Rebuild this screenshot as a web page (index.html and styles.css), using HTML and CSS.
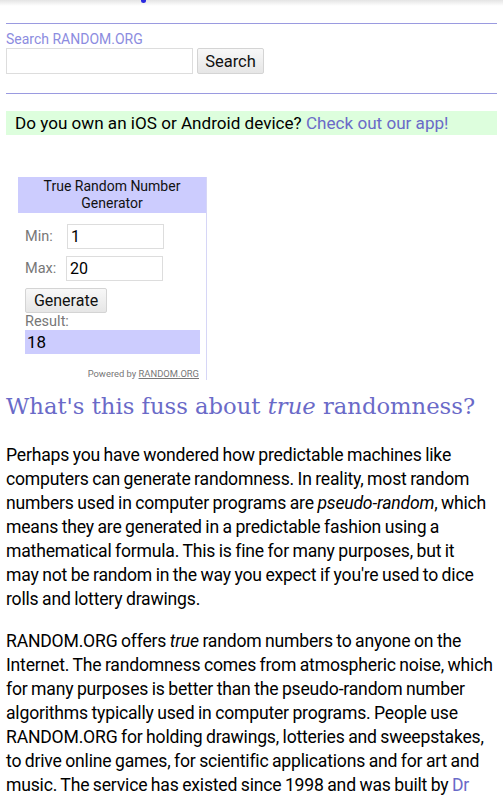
FILE: index.html
```html
<!DOCTYPE html>
<html lang="en">
<head>
  <meta charset="UTF-8">
  <meta name="viewport" content="width=device-width, initial-scale=1.0">
  <title>RANDOM.ORG - True Random Number Service</title>
  <link rel="stylesheet" href="styles.css">
</head>
<body>
  <div class="top-shade"><span class="top-dot"></span></div>

  <hr class="rule">

  <!-- Search -->
  <form class="search">
    <label class="search-label" for="q">Search RANDOM.ORG</label>
    <div class="search-row">
      <input id="q" class="search-input" type="text">
      <button class="btn search-btn" type="button">Search</button>
    </div>
  </form>

  <hr class="rule">

  <div class="app-note">
    Do you own an iOS or Android device? <a href="#">Check out our app!</a>
  </div>

  <!-- Number generator widget -->
  <div class="widget">
    <div class="widget-head">True Random Number<br>Generator</div>
    <div class="widget-body">
      <div class="field">
        <span class="field-label">Min:</span>
        <input class="field-input" type="text" value="1">
      </div>
      <div class="field">
        <span class="field-label">Max:</span>
        <input class="field-input field-max" type="text" value="20">
      </div>
      <button class="btn gen-btn" type="button">Generate</button>
      <div class="result-label">Result:</div>
      <div class="result">18</div>
      <div class="powered">Powered by <a href="#">RANDOM.ORG</a></div>
    </div>
  </div>

  <h2 class="fuss">What's this fuss about <em>true</em> randomness?</h2>

  <p>Perhaps you have wondered how predictable machines like computers can generate randomness. In reality, most random numbers used in computer programs are <em>pseudo-random</em>, which means they are generated in a predictable fashion using a mathematical formula. This is fine for many purposes, but it may&nbsp;not be random in the way you expect if you're used to dice rolls and lottery drawings.</p>

  <p>RANDOM.ORG offers <em>true</em> random numbers to anyone on the Internet. The randomness comes from atmospheric noise, which for many purposes is better than the pseudo-random number algorithms typically used in computer programs. People use RANDOM.ORG for holding drawings, lotteries and sweepstakes, to drive online games, for scientific applications and for art and music. The service has existed since 1998 and was built by <a href="#">Dr Mads Haahr</a> of the School of Computer Science and Statistics at Trinity College, Dublin in Ireland.</p>
</body>
</html>
```

FILE: styles.css
```css
html, body {
  margin: 0;
  padding: 0;
  background: #fff;
  overflow: hidden;
}
body {
  padding: 0 6px;
  font-family: Roboto, 'Noto Sans', sans-serif;
  color: #000;
}
a {
  color: #6a6ac8;
  text-decoration: none;
}
.top-shade {
  height: 6px;
  margin: 0 -6px;
  background: linear-gradient(#e4e4e4, #fff);
  position: relative;
}
.top-dot {
  position: absolute;
  left: 141px;
  top: 0;
  width: 5px;
  height: 3px;
  border-radius: 0 0 3px 3px;
  background: #2a2ae0;
}
.rule {
  border: 0;
  border-top: 1px solid #9a9ae0;
  margin: 17px 0 0;
}
.search {
  margin: 7px 0 0;
}
.search-label {
  display: block;
  color: #8c8ce0;
  font-size: 14px;
  line-height: 17px;
}
.search-row {
  display: flex;
  gap: 4px;
  margin-top: 0;
}
.search-input {
  width: 187px;
  height: 26px;
  box-sizing: border-box;
  border: 1px solid #ddd;
  margin: 0;
}
.btn {
  font-family: Roboto, sans-serif;
  color: #111;
  background: linear-gradient(#f8f8f8, #e6e6e6);
  border: 1px solid #d4d4d4;
  border-radius: 2px;
  margin: 0;
  padding: 0;
}
.search-btn {
  width: 67px;
  height: 26px;
  font-size: 16.5px;
}
.search + .rule {
  margin-top: 19px;
}
.app-note {
  margin-top: 17px;
  background: #ddfedd;
  font-size: 17.1px;
  line-height: 24px;
  padding: 0 9px;
}
.widget {
  margin: 42px 0 0 12px;
  width: 188px;
  border-right: 1px solid #d6d6f6;
}
.widget-head {
  background: #ccccfe;
  text-align: center;
  font-size: 14px;
  line-height: 17px;
  padding: 1px 4px 1px;
  color: #111;
}
.widget-body {
  padding: 11px 6px 0 7px;
}
.field {
  display: flex;
  align-items: center;
  margin-bottom: 7px;
}
.field-label {
  color: #777;
  font-size: 14.5px;
  width: 42px;
}
.field-input {
  width: 97px;
  height: 25px;
  box-sizing: border-box;
  border: 1px solid #ddd;
  font-family: Roboto, sans-serif;
  font-size: 16px;
  padding: 0 3px;
  margin: 0;
}
.field-max {
  margin-left: -1px;
}
.gen-btn {
  width: 82px;
  height: 25px;
  font-size: 16px;
}
.result-label {
  color: #777;
  font-size: 14.5px;
  line-height: 17px;
}
.result {
  background: #ccccfe;
  width: 175px;
  height: 24px;
  box-sizing: border-box;
  font-size: 17px;
  line-height: 24px;
  padding-left: 2px;
}
.powered {
  text-align: right;
  font-size: 9.4px;
  color: #777;
  margin: 14px 1px 0 0;
  padding-bottom: 1px;
}
.powered a {
  color: #777;
  text-decoration: underline;
}
.fuss {
  font-family: 'DejaVu Serif', serif;
  font-weight: normal;
  color: #6a6ac8;
  font-size: 22.7px;
  margin: 10px 0 0;
  line-height: 32px;
}
p {
  font-size: 17.6px;
  line-height: 24px;
  letter-spacing: -0.2px;
  word-spacing: -0.6px;
  margin: 18px 0 0;
}
.fuss + p {
  margin-top: 21px;
}
```
